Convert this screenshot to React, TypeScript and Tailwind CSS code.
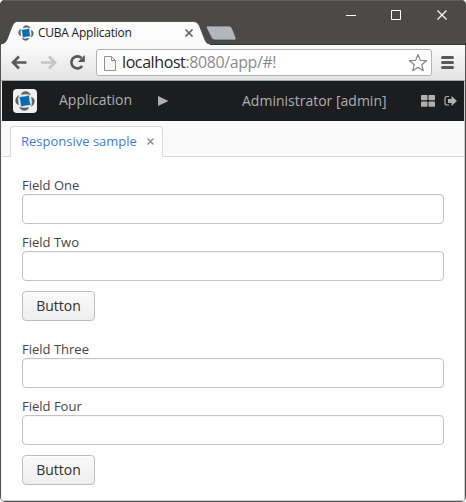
import React from "react";

function CubaMark({ className }: { className: string }) {
  return (
    <svg viewBox="0 0 20 20" className={className}>
      <g fill="#67625f">
        <path id="blade" d="M5.800 3.800Q7 .5 10.300 .3Q14 .4 16 4.300Q13.500 3 11 3.200Q8.500 3.500 5.800 3.800Z" />
        <path d="M5.800 3.800Q7 .5 10.300 .3Q14 .4 16 4.300Q13.500 3 11 3.200Q8.500 3.500 5.800 3.800Z" transform="rotate(90 10 10)" />
        <path d="M5.800 3.800Q7 .5 10.300 .3Q14 .4 16 4.300Q13.500 3 11 3.200Q8.500 3.500 5.800 3.800Z" transform="rotate(180 10 10)" />
        <path d="M5.800 3.800Q7 .5 10.300 .3Q14 .4 16 4.300Q13.500 3 11 3.200Q8.500 3.500 5.800 3.800Z" transform="rotate(270 10 10)" />
      </g>
      <path d="M4.700 6.200Q9.800 6 13.800 4.700Q14 9.800 15.300 13.800Q10.200 14 6.200 15.300Q6 10.200 4.700 6.200Z" fill="#006db5" stroke="#006db5" strokeWidth=".5" strokeLinejoin="round" />
    </svg>
  );
}

function TitleBar() {
  return (
    <div className="relative flex h-[45px] shrink-0 items-start border-t border-[#62615e] bg-[#4b4a47]">
      <svg className="absolute top-[19px] left-0 h-[25px] w-[466px]" viewBox="0 0 466 25">
        <path d="M0 24.5H466" stroke="#353431" />
        <path d="M1 25V24Q5 24 6.800 20L12.200 6Q14 1.500 17 1.500H194Q197.500 1.500 199.500 6L205 20Q206.500 24 210 24V25Z" fill="#fbfbfb" />
        <path d="M1 24Q5 24 6.800 20L12.200 6Q14 1.500 17 1.500H194Q197.500 1.500 199.500 6L205 20Q206.500 24 210 24" fill="none" stroke="#3b3a38" strokeWidth=".7" />
        <path d="M207 6H229Q231.500 6 232.500 9L236 18Q236.700 20 234.500 20H215Q212 20 211 17L206.500 8Q206 6 207 6Z" fill="#b2b7bf" stroke="#3d3c3a" strokeWidth=".7" />
      </svg>
      <div className="relative flex w-[206px] items-center pt-[24px] pl-[18px]">
        <CubaMark className="h-4 w-4" />
        <span className="-mt-px ml-1 w-[146px] text-[12px] leading-4 tracking-[-0.23px] whitespace-nowrap text-[#202020]">CUBA Application</span>
        <svg className="h-[10px] w-[10px]" viewBox="0 0 10 10"><path d="M1.500 1.500L8.500 8.500M8.500 1.500L1.500 8.500" stroke="#606060" strokeWidth="1.700" /></svg>
      </div>
      <svg className="ml-auto h-[20px] w-[130px]" viewBox="336 1 130 20" fill="none" stroke="#fff">
        <path d="M346 15.500H356" />
        <path d="M391.500 10.500H400.500V19.500H391.500Z" />
        <path d="M437.500 10.500L446.500 19.500M446.500 10.500L437.500 19.500" strokeWidth="1.200" />
      </svg>
    </div>
  );
}

function Toolbar() {
  return (
    <div className="mx-px flex h-[36px] shrink-0 items-start border-b border-[#a5a5a5] bg-linear-to-b from-[#fbfbfb] to-[#e3e3e3] pt-1">
      <svg className="h-[28px] w-[95px] shrink-0" viewBox="1 49 95 28" fill="none" strokeWidth="2.600">
        <path d="M13.500 62.500H26.500M19 56.500L13 62.500L19 68.500" stroke="#595959" />
        <path d="M41 62.500H54.500M49 56.500L55 62.500L49 68.500" stroke="#c5c5c5" />
        <path d="M82.200 66A6 6 0 1 1 81.500 58" stroke="#595959" />
        <path d="M84.800 55V62H77.800Z" fill="#595959" />
      </svg>
      <div className="flex h-[27px] w-[336px] shrink-0 items-center rounded-[3px] border border-[#b4b4b4] bg-white">
        <svg className="ml-[7px] h-4 w-3 shrink-0" viewBox="0 0 12 16" fill="#f8f8f8" stroke="#929292">
          <path d="M.5 1.500H7.500L11.500 5.500V15.500H.5ZM7.500 1.500V5.500H11.500" />
        </svg>
        <span className="ml-[6px] -mt-px text-[16px] leading-5 tracking-[-0.4px] whitespace-nowrap text-[#8b8b8b]"><span className="text-[#262626]">localhost</span>:8080/app/#!</span>
        <svg className="mr-[3px] ml-auto h-5 w-5 shrink-0" viewBox="0 0 20 20" fill="#fff" stroke="#858585" strokeWidth="1.200" strokeLinejoin="round">
          <path d="M10 1.500L12.300 7.400L18.500 7.700L13.700 11.700L15.300 17.700L10 14.300L4.700 17.700L6.300 11.700L1.500 7.700L7.700 7.400Z" />
        </svg>
      </div>
      <svg className="mt-[6px] ml-[9px] h-[15px] w-[13px]" viewBox="0 0 13 15"><path d="M1.500 2.500H11.500M1.500 7.500H11.500M1.500 12.500H11.500" stroke="#595959" strokeWidth="3" strokeLinecap="round" /></svg>
    </div>
  );
}

function AppHeader() {
  return (
    <div className="flex h-10 shrink-0 items-center bg-[#1c1d1f] pl-[11px] text-[14px] text-[#b0b0b0]">
      <div className="flex h-6 w-6 items-center justify-center rounded-[4px] bg-[#f0f0f0]"><CubaMark className="h-5 w-5" /></div>
      <span className="-mt-[2px] ml-[22px] w-[99px] leading-5">Application</span>
      <svg className="-mt-px h-[10px] w-[11px]" viewBox="0 0 11 10"><path d="M0 0L10.500 5L0 10Z" fill="#b0b0b0" /></svg>
      <span className="ml-[73px] w-[179px] leading-5 whitespace-nowrap">Administrator [admin]</span>
      <svg className="h-[12px] w-[14px]" viewBox="0 0 14 12" fill="#b0b0b0">
        <rect width="6.500" height="5.300" rx=".7" /><rect x="7.500" width="6.500" height="5.300" rx=".7" />
        <rect y="6.500" width="6.500" height="5.300" rx=".7" /><rect x="7.500" y="6.500" width="6.500" height="5.300" rx=".7" />
      </svg>
      <svg className="ml-[9px] h-[12px] w-[13px]" viewBox="0 0 13 12">
        <path d="M5 1.500H3Q1 1.500 1 3.500V8Q1 10 3 10H5" fill="none" stroke="#b0b0b0" strokeWidth="1.200" />
        <path d="M4 4H7.500V1L13 6L7.500 11V8H4Z" fill="#b0b0b0" />
      </svg>
    </div>
  );
}

function Field({ label }: { label: string }) {
  return (
    <label className="mb-[10px] block text-[13px] leading-[17px] text-[#464646]">
      <span className="block h-[17px]">{label}</span>
      <input className="block h-[30px] w-[422px] rounded-[4px] border border-[#c3c3c3] bg-white px-2 shadow-[inset_0_1px_0_#f7f7f7] outline-none" />
    </label>
  );
}

function FieldGroup({ labels }: { labels: string[] }) {
  return (
    <section>
      {labels.map((label) => <Field key={label} label={label} />)}
      <button className="block h-[30px] w-[73px] rounded-[4px] border border-[#bfbfbf] bg-linear-to-b from-[#fafafa] to-[#eee] text-[14px] leading-5 text-[#2f2f2f] shadow-[inset_0_1px_0_#fff]">Button</button>
    </section>
  );
}

export default function App() {
  return (
    <div className="h-[502px] w-[466px] bg-white">
      <div className="flex h-[502px] w-[466px] flex-col overflow-hidden rounded-[5px] bg-[#555] font-['Open_Sans',sans-serif]">
        <TitleBar />
        <Toolbar />
        <main className="mx-px mb-px flex min-h-0 grow flex-col rounded-b-[2px] border-r border-b border-l border-[#c8c8c8] border-l-[#f4f4f4] bg-white">
          <AppHeader />
          <div className="flex h-9 shrink-0 items-end border-b border-[#dadada] bg-[#fafafa] pl-2">
            <div className="-mb-px flex h-[31px] w-[153px] items-center rounded-t-[4px] border border-b-0 border-[#dadada] bg-white pl-[10px] text-[13px] whitespace-nowrap text-[#3b7dde]">
              <span className="w-[126px]">Responsive sample</span>
              <svg className="-mt-px h-[7px] w-[7px]" viewBox="0 0 7 7"><path d="M.5 .5L6.500 6.500M6.500 .5L.5 6.500" stroke="#888" strokeWidth="1.200" /></svg>
            </div>
          </div>
          <div className="flex flex-col gap-5 pt-5 pl-5">
            <FieldGroup labels={["Field One", "Field Two"]} />
            <FieldGroup labels={["Field Three", "Field Four"]} />
          </div>
        </main>
      </div>
    </div>
  );
}
